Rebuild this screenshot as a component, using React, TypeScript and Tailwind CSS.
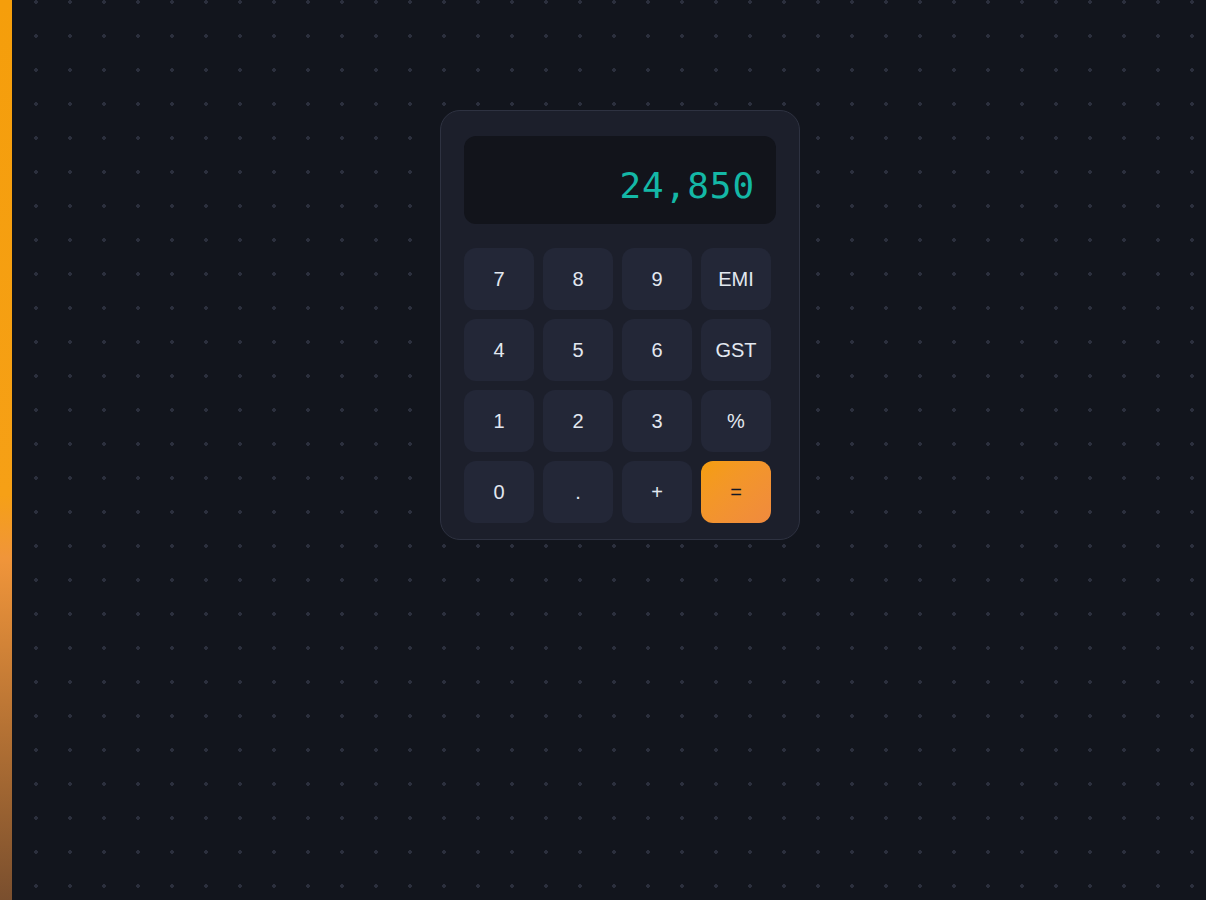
import React from 'react';

const keys = [
  ['7', '8', '9', 'EMI'],
  ['4', '5', '6', 'GST'],
  ['1', '2', '3', '%'],
  ['0', '.', '+', '='],
];

const App = () => {
  return (
    <div className="flex min-h-[900px] w-full bg-[#12151d]">
      {/* Accent bar */}
      <div className="w-3 shrink-0 bg-[linear-gradient(180deg,#f59e0b_0%,#f6a016_55%,#f0953a_62%,#7a4f2e_100%)]" />

      {/* Dotted canvas */}
      <div
        className="flex-1 pl-[428px] pt-[110px] bg-[radial-gradient(circle_at_2px_2px,#2b2f3d_1.6px,transparent_2px)] bg-[length:34px_34px] bg-[position:-12px_0px]"
      >
        <div className="w-[360px] rounded-[20px] border border-[#2e3241] bg-[#1c1f2b] pt-[25px] pb-4 px-[23px]">
          {/* Display */}
          <div className="rounded-xl bg-[#12141b] pt-[30px] pb-[18px] pl-6 pr-[21px] text-right">
            <span className="text-4xl leading-10 tracking-wide text-[#14b8a6] font-['DejaVu_Sans_Mono',monospace]">
              24,850
            </span>
          </div>

          {/* Keypad */}
          <div className="mt-6 grid grid-cols-[repeat(4,70px)] auto-rows-[62px] gap-[9px]">
            {keys.flat().map(k => (
              <button
                key={k}
                className={
                  k === '='
                    ? "rounded-xl bg-gradient-to-br from-[#f59e0b] to-[#f08a3e] text-xl text-[#111827] font-['Liberation_Sans',Arial,sans-serif]"
                    : "rounded-xl bg-[#232737] text-xl text-[#e2e8f0] font-['Liberation_Sans',Arial,sans-serif]"
                }
              >
                {k}
              </button>
            ))}
          </div>
        </div>
      </div>
    </div>
  );
};

export default App;
